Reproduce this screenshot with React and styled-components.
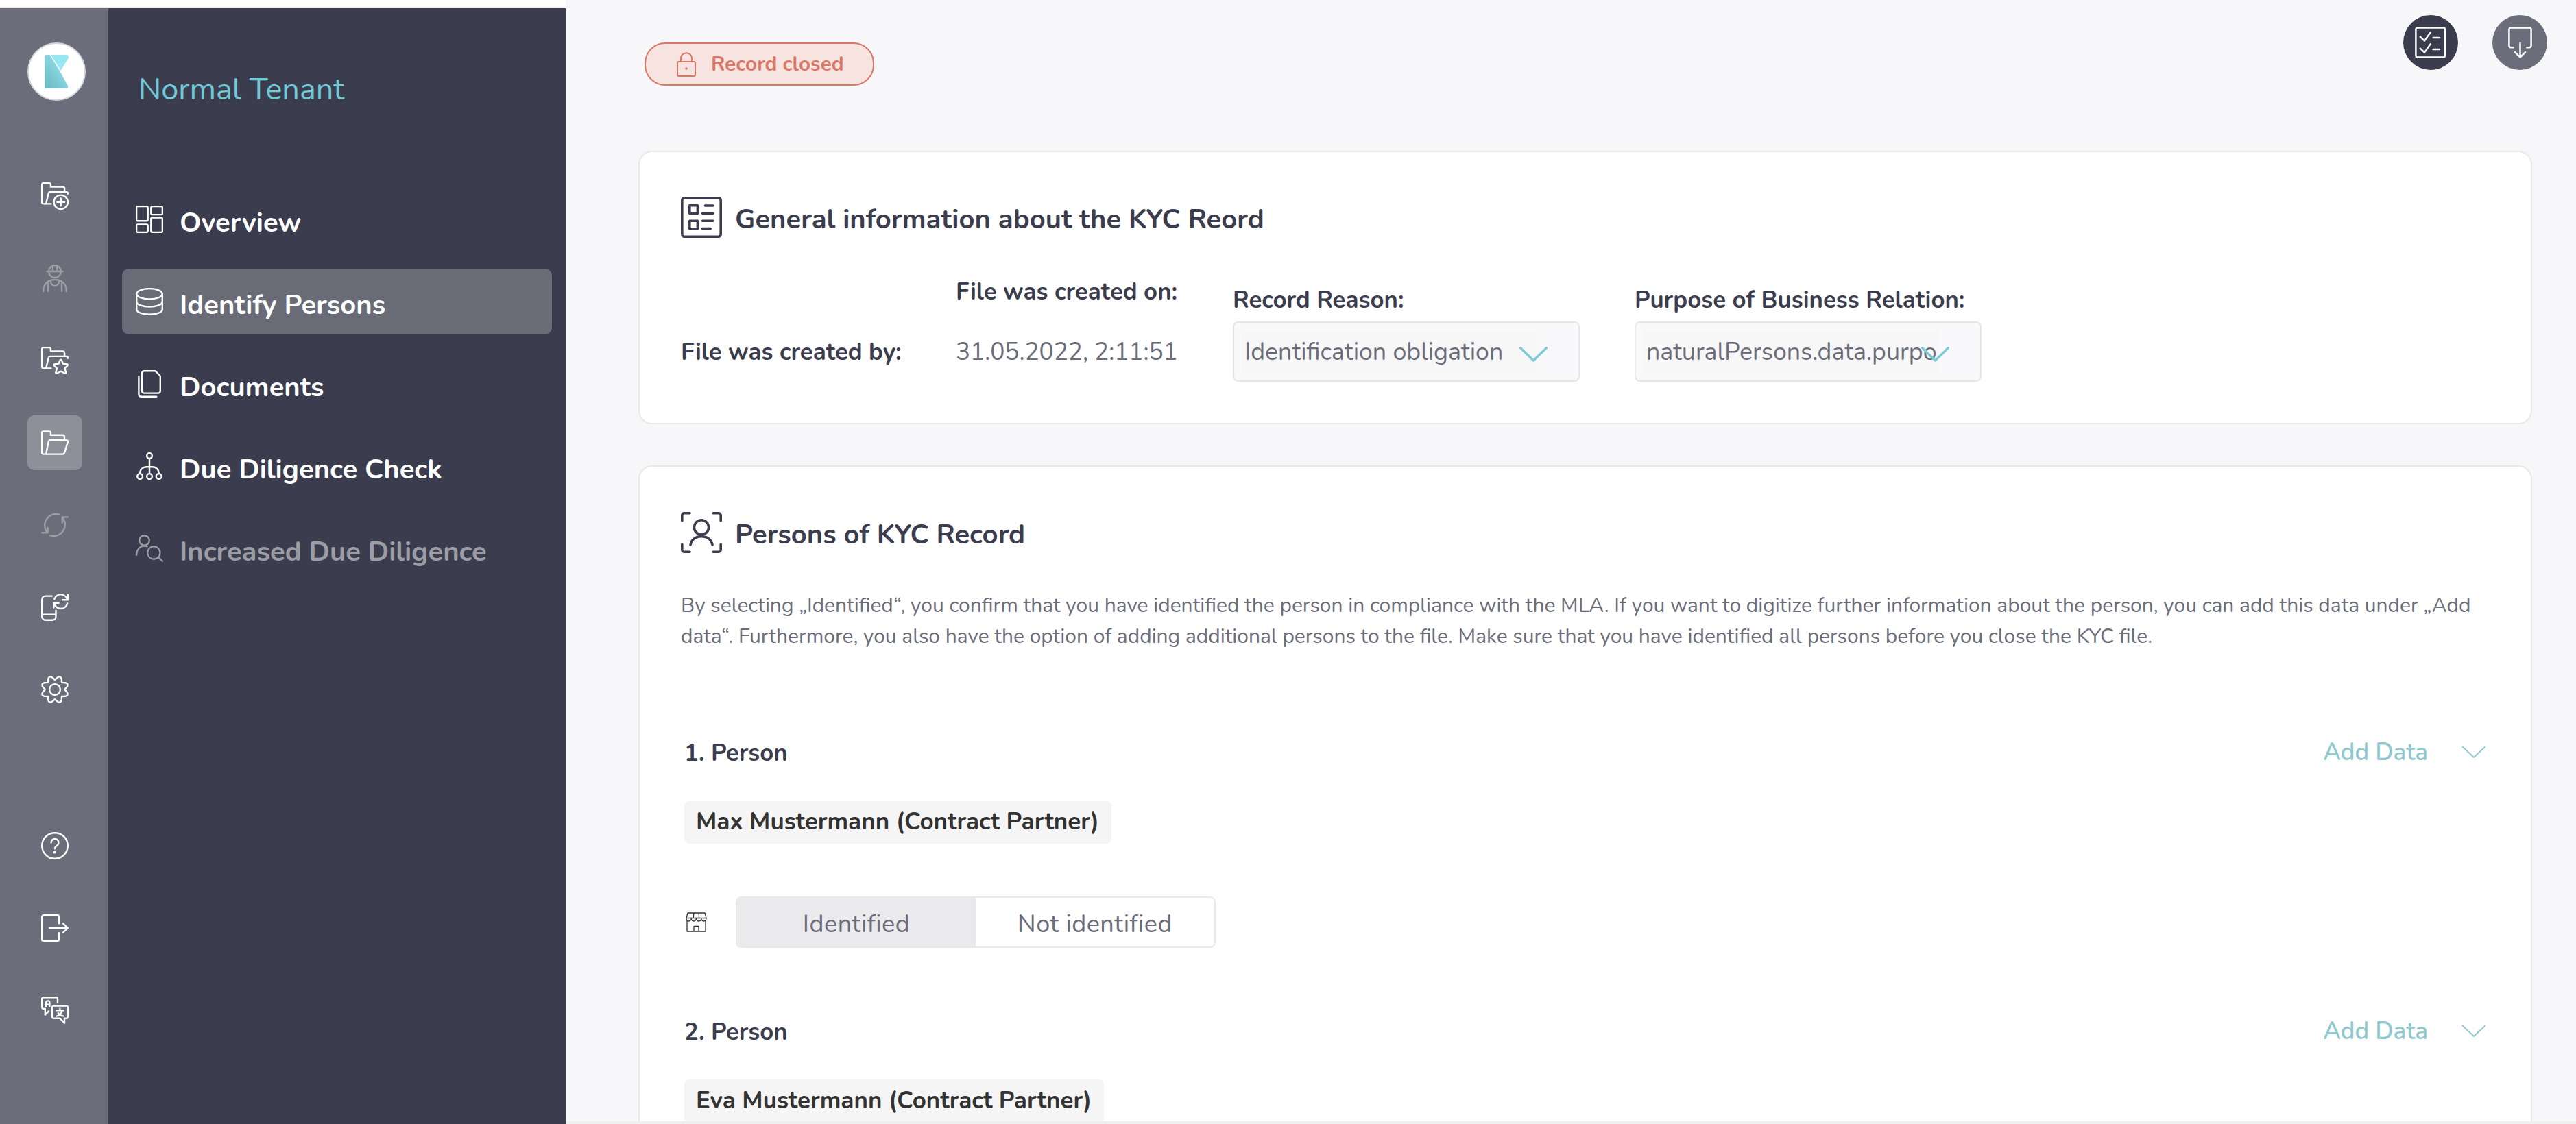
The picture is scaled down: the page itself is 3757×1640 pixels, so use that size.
import React from 'react';

import styled, { createGlobalStyle } from 'styled-components';


const GlobalStyle = createGlobalStyle`
  * {
    box-sizing: border-box;
  }
  body {
    margin: 0;
    background: #f7f7fa;
    color: #3b3d4f;
    font-family: Nunito, Lato, "Open Sans", sans-serif;
    font-size: 35.2px;
    line-height: 48px;
  }
`;

/* ---------- icons ---------- */

const Svg = styled.svg`
  display: block;
  flex: none;
  fill: none;
  stroke: currentColor;
  stroke-width: ${(p) => p.$stroke || 2.4};
  stroke-linecap: round;
  stroke-linejoin: round;
`;

const Icon = ({ w = 40, h = 40, stroke, children }) => (
  <Svg width={w} height={h} viewBox={`0 0 ${w} ${h}`} $stroke={stroke}>
    {children}
  </Svg>
);

const folderBack = 'M14.4 31.4H3.4a2.3 2.3 0 0 1-2.3-2.3V3.4A2.3 2.3 0 0 1 3.4 1.1h8.2a2.3 2.3 0 0 1 2.3 2.3v3.1h17.4a2.8 2.8 0 0 1 2.8 2.8v4.5';
const folderFlap = 'M5.6 31.4c1 0 1.5-.6 1.8-1.7l3.3-13.4a3 3 0 0 1 2.9-2.4h23c1.5 0 2.5 1.3 2.2 2.9';

const FolderAddIcon = () => (
  <Icon>
    <path d={folderBack} />
    <path d={folderFlap} />
    <circle cx="28.7" cy="28.8" r="10.2" />
    <path d="M28.7 23.4v10.8M23.3 28.8h10.8" />
  </Icon>
);

const FolderStarIcon = () => (
  <Icon>
    <path d={folderBack} />
    <path d={folderFlap} />
    <path d="M27.4 19.9q1.3-2.2 2.6 0l2.1 4.8 5.2.5q2.4.5.9 2.4l-3.9 3.7 1.7 5.7q.3 2.3-1.9 1.5l-5.4-2.7-5.4 2.7q-2.2.8-1.9-1.5l1.7-5.7-3.9-3.7q-1.5-1.9.9-2.4l5.2-.5z" />
  </Icon>
);

const FolderIcon = () => (
  <Icon>
    <path d="M34 16.2v-4.6a2.8 2.8 0 0 0-2.8-2.8H13.9V5.7a2.3 2.3 0 0 0-2.3-2.3H3.4a2.3 2.3 0 0 0-2.3 2.3v28.6a2.3 2.3 0 0 0 2.3 2.3h27.8a3 3 0 0 0 2.9-2.3l4.7-15.2a2.3 2.3 0 0 0-2.3-2.9H13.6a3 3 0 0 0-2.9 2.3L7.4 34.9c-.3 1.1-.8 1.7-1.8 1.7" />
  </Icon>
);

const WorkerIcon = () => (
  <Icon>
    <circle cx="20" cy="10" r="9" />
    <path d="M8.4 10h23.2M16.8 1.8v7.6M23.2 1.8v7.6" />
    <path d="M3.3 39v-1c0-9 6-16 16.7-16s16.7 7 16.7 16v1" />
    <path d="M13.6 23.6c0 4.4 3 7.6 6.4 7.6s6.4-3.2 6.4-7.6M10 27v12M30 27v12" />
  </Icon>
);

const SyncIcon = () => (
  <Icon>
    <path d="M26.6 4.7A16.6 16.6 0 0 0 9 31.2M1.2 31.3h8.3v-7.6" />
    <path d="M13.4 35.3A16.6 16.6 0 0 0 31 8.8M38.8 8.5h-8v8.2" />
  </Icon>
);

const PhoneSyncIcon = () => (
  <Icon>
    <path d="M15.6 3.6H6.5a5.3 5.3 0 0 0-5.3 5.3v24.6a5.3 5.3 0 0 0 5.3 5.3h9.7a5.3 5.3 0 0 0 5.3-5.3v-8.7M1.2 30.7h20.3" />
    <path d="M19.3 8a9.8 9.8 0 0 1 18.8.8M38.8 1.6v7.7h-7.4" />
    <path d="M38.2 14.3a9.8 9.8 0 0 1-19.2-.2M18.4 20.6v-6.8h7.2" />
  </Icon>
);

// eight rounded teeth, notches on the axes
const gearPath = Array.from({ length: 160 }, (_, i) => {
  const a = (i / 160) * Math.PI * 2;
  const s = (1 - Math.cos(8 * a)) / 2;
  const r = 14.3 + 5.6 * Math.pow(s, 0.75);
  return `${i ? 'L' : 'M'}${(20 + r * Math.cos(a)).toFixed(2)} ${(20 + r * Math.sin(a)).toFixed(2)}`;
}).join('') + 'Z';

const GearIcon = () => (
  <Icon>
    <path d={gearPath} />
    <circle cx="20" cy="20" r="7.9" />
  </Icon>
);

const HelpIcon = () => (
  <Icon>
    <circle cx="20" cy="20" r="18.8" />
    <path d="M14.6 15.4a5.4 5.4 0 1 1 8.4 4.4c-2 1.3-3 2.2-3 4.5" />
    <circle cx="20" cy="29.4" r="1" fill="currentColor" />
  </Icon>
);

const LogoutIcon = () => (
  <Icon>
    <path d="M26 13.2V3.6a2.3 2.3 0 0 0-2.3-2.3H3.5a2.3 2.3 0 0 0-2.3 2.3v32.8a2.3 2.3 0 0 0 2.3 2.3h20.2a2.3 2.3 0 0 0 2.3-2.3v-9.2" />
    <path d="M12.4 20h26.4M32 13.4l6.8 6.6-6.8 6.6" />
  </Icon>
);

const TranslateIcon = () => (
  <Icon>
    <path d="M24 9V3.4a2.2 2.2 0 0 0-2.2-2.2H3.4a2.2 2.2 0 0 0-2.2 2.2v12.4A2.2 2.2 0 0 0 3.4 18h2.4v8.6l5.4-5.4" />
    <path d="M7.2 14.6V9a2.6 2.6 0 0 1 5.2 0v5.6M7.2 11.6h5.2" />
    <path d="M18.2 13.6h18.4a2.2 2.2 0 0 1 2.2 2.2v13.8a2.2 2.2 0 0 1-2.2 2.2H34v7l-6.6-7h-9.2a2.2 2.2 0 0 1-2.2-2.2V15.8a2.2 2.2 0 0 1 2.2-2.2z" />
    <path d="M27.4 17.4v2.8M22.2 20.4h10.4M30.4 20.4c-.8 3.8-3.6 7-8 8.2M24.8 24c1.6 2.4 4.2 4 7.8 4.6" />
  </Icon>
);

const DashboardIcon = () => (
  <Icon>
    <rect x="1.1" y="1.1" width="16.6" height="21.2" rx="1.8" />
    <rect x="22.3" y="1.1" width="16.6" height="12" rx="1.8" />
    <rect x="1.1" y="27.4" width="16.6" height="11.5" rx="1.8" />
    <rect x="22.3" y="17.5" width="16.6" height="21.4" rx="1.8" />
  </Icon>
);

const DatabaseIcon = () => (
  <Icon>
    <ellipse cx="20" cy="8.8" rx="18.8" ry="7.7" />
    <path d="M1.2 8.8v22.6c0 4.2 8.4 7.4 18.8 7.4s18.8-3.2 18.8-7.4V8.8" />
    <path d="M1.2 20c0 4.2 8.4 7.6 18.8 7.6S38.8 24.2 38.8 20" />
  </Icon>
);

const DocumentsIcon = () => (
  <Icon>
    <path d="M12.2 1.2h15.6a2 2 0 0 1 1.4.6l6 6.2a2 2 0 0 1 .6 1.4v21a3.2 3.2 0 0 1-3.2 3.2H12.2A3.2 3.2 0 0 1 9 30.4v-26a3.2 3.2 0 0 1 3.2-3.2z" />
    <path d="M4.4 9.2v26.4a3.2 3.2 0 0 0 3.2 3.2h22.6" />
  </Icon>
);

const TreeIcon = () => (
  <Icon>
    <circle cx="20" cy="5.1" r="3.9" />
    <circle cx="6.1" cy="35" r="3.9" />
    <circle cx="20" cy="35" r="3.9" />
    <circle cx="33.7" cy="35" r="3.9" />
    <path d="M20 9v22M6.1 31c0-6 4-9.7 10-9.7h7.7c6 0 9.9 3.7 9.9 9.7" />
  </Icon>
);

const UserSearchIcon = () => (
  <Icon>
    <circle cx="12.5" cy="8.5" r="7.3" />
    <path d="M1.2 29.6c0-7.8 5-13 11-13 1.6 0 3 .2 4.3.7" />
    <circle cx="26.3" cy="26.5" r="9.2" />
    <path d="M32.9 33l6 5.6" />
  </Icon>
);

const ReportIcon = () => (
  <Icon w={60} h={60} stroke={3.6}>
    <rect x="1.8" y="1.8" width="56.4" height="56.4" rx="3.4" />
    <rect x="12.8" y="12.8" width="11.6" height="11.6" />
    <rect x="12.8" y="35.2" width="11.6" height="11.6" />
    <path d="M35.4 13h11.6M31.6 24.3h15.4M31.6 35.3h15.4M31.6 46.6h11.6" />
  </Icon>
);

const PersonScanIcon = () => (
  <Icon w={60} h={60} stroke={3.6}>
    <path d="M1.8 13V4.8a3 3 0 0 1 3-3H13M47 1.8h8.2a3 3 0 0 1 3 3V13M58.2 47v8.2a3 3 0 0 1-3 3H47M13 58.2H4.8a3 3 0 0 1-3-3V47" />
    <circle cx="30" cy="22.4" r="10.6" />
    <path d="M14 48c1.6-7.6 7.6-12.4 16-12.4S44.4 40.4 46 48" />
  </Icon>
);

const LockIcon = () => (
  <Icon w={28} h={36} stroke={2}>
    <rect x="1" y="14" width="26" height="21" rx="2" />
    <path d="M6 14V9.2a8 8 0 0 1 16 0V14" />
    <circle cx="14" cy="24" r=".8" />
  </Icon>
);

const ChecklistIcon = () => (
  <Icon w={46} h={46} stroke={2.5}>
    <rect x="1.4" y="1.4" width="42.6" height="43" rx="2.6" />
    <path d="M7.8 14.6l6.2 6 8.6-12.2M26.6 16h9.4M7.8 31.6l6.2 6 8.6-12.2M26.6 33h9.4" />
  </Icon>
);

const ExportIcon = () => (
  <Icon w={35} h={46} stroke={2.5}>
    <path d="M7.4 30.2H4.2a2.8 2.8 0 0 1-2.8-2.8V4.2a2.8 2.8 0 0 1 2.8-2.8h26.6a2.8 2.8 0 0 1 2.8 2.8v23.2a2.8 2.8 0 0 1-2.8 2.8h-3.6" />
    <path d="M17.5 23.4v21.2M10 37.2l7.5 7.4 7.5-7.4" />
  </Icon>
);

const StoreIcon = () => (
  <Icon w={31} h={29} stroke={1.3}>
    <path d="M3 1h25l2 7.5H1zM11.8 1l-.4 7.5M19.2 1l.4 7.5" />
    <path d="M1 8.5c0 6 7.2 6 7.2 0 0 6 7.3 6 7.3 0 0 6 7.3 6 7.3 0 0 6 7.2 6 7.2 0" />
    <path d="M2 12.5V28h27V12.5M12 28v-7.5h7V28" />
  </Icon>
);

const ChevronIcon = ({ w = 41, h = 22, stroke = 3.4 }) => (
  <Icon w={w} h={h} stroke={stroke}>
    <path d={`M1.7 1.7L${w / 2} ${h - 2}L${w - 1.7} 1.7`} />
  </Icon>
);

const KLogo = () => (
  <svg width="35" height="49" viewBox="0 0 35 49">
    <defs>
      <linearGradient id="kfill" x1="1" y1="0" x2="0" y2="1">
        <stop offset="0" stopColor="#9debf6" />
        <stop offset="1" stopColor="#68b7bf" />
      </linearGradient>
    </defs>
    <path d="M2 0h5.5l15.3 24.5L34 45.5q.6 3.5-2.5 3.5H2q-2 0-2-2V2q0-2 2-2z" fill="url(#kfill)" />
    <path d="M9 0H32q3 0 3 4.5L23.6 22.8z" fill="#97e7f1" />
  </svg>
);

/* ---------- layout ---------- */

const Page = styled.div`
  display: flex;
  height: 1640px;
  overflow: hidden;
`;

const Side = styled.div`
  width: 825px;
  flex: none;
  display: flex;
  flex-direction: column;
`;

const SideTop = styled.div`
  height: 12px;
  flex: none;
  background: #ffffff;
  border-bottom: 2px solid #e9ebee;
`;

const SideBody = styled.div`
  flex: 1;
  display: flex;
`;

const Rail = styled.nav`
  width: 158px;
  padding: 50px 0 0 40px;
  background: #6b6d7a;
`;

const LogoBadge = styled.div`
  width: 85px;
  height: 85px;
  border-radius: 50%;
  border: 2px solid #d3d4d8;
  background: #ffffff;
  display: flex;
  align-items: center;
  justify-content: center;
`;

const RailGroup = styled.div`
  margin-top: ${(p) => p.$top}px;
  display: flex;
  flex-direction: column;
  gap: 40px;
`;

const RailButton = styled.div`
  width: 80px;
  height: 80px;
  border-radius: 10px;
  display: flex;
  align-items: center;
  justify-content: center;
  color: ${(p) => (p.$disabled ? '#9b9da4' : '#ffffff')};
  background: ${(p) => (p.$active ? '#8d9098' : 'transparent')};
`;

const Menu = styled.nav`
  flex: 1;
  padding: 89px 20px 0;
  background: #3b3d4f;
`;

const Tenant = styled.div`
  margin-bottom: 111px;
  padding-left: 24px;
  font-size: 45px;
  line-height: 60px;
  color: #70cad8;
`;

const MenuItem = styled.div`
  height: 96px;
  margin-bottom: 24px;
  padding: 0 20px;
  border-radius: 10px;
  display: flex;
  align-items: center;
  gap: 24px;
  color: ${(p) => (p.$disabled ? '#9b9da4' : '#ffffff')};
  background: ${(p) => (p.$active ? '#696b76' : 'transparent')};
`;

const MenuLabel = styled.span`
  padding-top: 10px;
  font-size: 40px;
  font-weight: 700;
  white-space: nowrap;
`;

const Main = styled.main`
  flex: 1;
  min-width: 0;
  display: flex;
  flex-direction: column;
`;

const Content = styled.div`
  height: 1636px;
  overflow: hidden;
`;

const BottomEdge = styled.div`
  height: 4px;
  background: #f0f0f1;
`;

const Header = styled.header`
  height: 220px;
  padding: 22px 42px 0 115px;
  display: flex;
  align-items: flex-start;
  justify-content: space-between;
`;

const StatusPill = styled.div`
  margin-top: 40px;
  width: 335px;
  height: 63px;
  padding-left: 45px;
  border: 2px solid #d97866;
  border-radius: 30px;
  background: #f7e3df;
  color: #d97866;
  display: flex;
  align-items: center;
  gap: 22px;
  font-size: 29.8px;
  font-weight: 700;
  white-space: nowrap;
`;

const HeaderActions = styled.div`
  display: flex;
  gap: 50px;
`;

const RoundButton = styled.div`
  width: 80px;
  height: 80px;
  border-radius: 50%;
  display: flex;
  align-items: center;
  justify-content: center;
  color: #ffffff;
  background: ${(p) => (p.$muted ? '#6b6d7a' : '#3b3d4f')};
`;

const Card = styled.section`
  width: 2762px;
  height: ${(p) => p.$height}px;
  margin: 0 0 60px 106px;
  padding: ${(p) => p.$top}px 60px 0;
  border: 2px solid #e9e9eb;
  border-radius: 20px;
  background: #ffffff;
`;

const CardHead = styled.div`
  height: 60px;
  display: flex;
  align-items: center;
  gap: 19px;
`;

const CardTitle = styled.h2`
  margin: 0;
  padding-top: 5px;
  font-size: 40px;
  font-weight: 700;
`;

const Fields = styled.div`
  margin-top: 54px;
  display: grid;
  grid-template-columns: 401px 404px 586px 506px;
  align-items: end;
`;

const Field = styled.div`
  padding-bottom: ${(p) => (p.$plain ? 20 : 0)}px;
  display: flex;
  flex-direction: column;
  gap: ${(p) => (p.$plain ? 40 : 8)}px;
`;

const FieldLabel = styled.span`
  padding-top: 1px;
  margin-bottom: -1px;
  font-size: 34.85px;
  font-weight: 700;
  white-space: nowrap;
`;

const FieldValue = styled.span`
  color: #6b6d7a;
  white-space: nowrap;
`;

const SelectBox = styled.div`
  position: relative;
  width: 506px;
  height: 88px;
  padding: 11px 10px;
  border: 2px solid #e5e6e8;
  border-radius: 8px;
  background: #f9f9fc;
`;

const SelectValue = styled.div`
  width: 431px;
  height: 62px;
  padding-left: 5px;
  overflow: hidden;
  background: #f7f7f7;
  color: #6b6d7a;
  font-size: 35.8px;
  line-height: 63px;
  white-space: nowrap;
`;

const SelectArrow = styled.span`
  position: absolute;
  left: 416px;
  top: 35px;
  color: #7accd8;
`;

const Hint = styled.p`
  margin: 54px 0 124px;
  font-size: 29.96px;
  line-height: 45px;
  color: #6b6d7a;
  white-space: nowrap;
`;

const Person = styled.div`
  height: 407px;
  padding: 0 5px;
`;

const PersonHead = styled.div`
  height: 48px;
  display: flex;
  justify-content: space-between;
  align-items: center;
  font-size: 34.85px;
  font-weight: 700;
`;

const AddData = styled.div`
  display: flex;
  align-items: center;
  gap: 49px;
  margin-top: -3px;
  color: #8fc8cf;
  font-size: 35px;
  font-weight: 600;
`;

const PersonName = styled.div`
  width: fit-content;
  height: 63px;
  margin-top: 45px;
  padding: 0 18px 0 17px;
  border-radius: 8px;
  background: #f5f5f5;
  color: #333333;
  font-size: 34.98px;
  font-weight: 700;
  line-height: 62px;
  white-space: nowrap;
`;

const IdentRow = styled.div`
  margin: 77px 0 0 2px;
  display: flex;
  align-items: center;
  gap: 42px;
  color: #333333;
`;

const Toggle = styled.div`
  width: 700px;
  height: 75px;
  border: 2px solid #e9e9eb;
  border-radius: 8px;
  overflow: hidden;
  display: flex;
`;

const ToggleOption = styled.div`
  flex: 1;
  padding-top: 3px;
  text-align: center;
  line-height: 71px;
  font-size: 36px;
  letter-spacing: 0.5px;
  color: #6b6d7a;
  background: ${(p) => (p.$selected ? '#ebebed' : '#ffffff')};
`;

/* ---------- data ---------- */

const railTop = [
  { icon: FolderAddIcon },
  { icon: WorkerIcon, disabled: true },
  { icon: FolderStarIcon },
  { icon: FolderIcon, active: true },
  { icon: SyncIcon, disabled: true },
  { icon: PhoneSyncIcon },
  { icon: GearIcon },
];

const railBottom = [{ icon: HelpIcon }, { icon: LogoutIcon }, { icon: TranslateIcon }];

const menuItems = [
  { label: 'Overview', icon: DashboardIcon },
  { label: 'Identify Persons', icon: DatabaseIcon, active: true },
  { label: 'Documents', icon: DocumentsIcon },
  { label: 'Due Diligence Check', icon: TreeIcon },
  { label: 'Increased Due Diligence', icon: UserSearchIcon, disabled: true },
];

const persons = [
  { name: 'Max Mustermann (Contract Partner)', onSite: true },
  { name: 'Eva Mustermann (Contract Partner)', onSite: false },
];

const RailButtons = ({ items, top }) => (
  <RailGroup $top={top}>
    {items.map(({ icon: ItemIcon, active, disabled }, i) => (
      <RailButton key={i} $active={active} $disabled={disabled}>
        <ItemIcon />
      </RailButton>
    ))}
  </RailGroup>
);

const Select = ({ value }) => (
  <SelectBox>
    <SelectValue>{value}</SelectValue>
    <SelectArrow>
      <ChevronIcon />
    </SelectArrow>
  </SelectBox>
);

const App = () => {

  return (
    <>
      <GlobalStyle />
      <Page>
        <Side>
          <SideTop />
          <SideBody>
            <Rail>
              <LogoBadge>
                <KLogo />
              </LogoBadge>
              <RailButtons items={railTop} top={99} />
              <RailButtons items={railBottom} top={148} />
            </Rail>
            <Menu>
              <Tenant>Normal Tenant</Tenant>
              {menuItems.map(({ label, icon: ItemIcon, active, disabled }) => (
                <MenuItem key={label} $active={active} $disabled={disabled}>
                  <ItemIcon />
                  <MenuLabel>{label}</MenuLabel>
                </MenuItem>
              ))}
            </Menu>
          </SideBody>
        </Side>

        <Main>
          <Content>
            <Header>
              <StatusPill>
                <LockIcon />
                Record closed
              </StatusPill>
              <HeaderActions>
                <RoundButton>
                  <ChecklistIcon />
                </RoundButton>
                <RoundButton $muted>
                  <ExportIcon />
                </RoundButton>
              </HeaderActions>
            </Header>

            <Card $height={399} $top={65}>
              <CardHead>
                <ReportIcon />
                <CardTitle>General information about the KYC Reord</CardTitle>
              </CardHead>
              <Fields>
                <Field $plain>
                  <FieldLabel>File was created by:</FieldLabel>
                </Field>
                <Field $plain>
                  <FieldLabel>File was created on:</FieldLabel>
                  <FieldValue>31.05.2022, 2:11:51</FieldValue>
                </Field>
                <Field>
                  <FieldLabel>Record Reason:</FieldLabel>
                  <Select value="Identification obligation" />
                </Field>
                <Field>
                  <FieldLabel>Purpose of Business Relation:</FieldLabel>
                  <Select value="naturalPersons.data.purpo" />
                </Field>
              </Fields>
            </Card>

            <Card $height={1400} $top={66}>
              <CardHead>
                <PersonScanIcon />
                <CardTitle>Persons of KYC Record</CardTitle>
              </CardHead>
              <Hint>
                By selecting „Identified“, you confirm that you have identified the person in compliance with the MLA. If you want to digitize further information about the person, you can add this data under „Add
                <br />
                data“. Furthermore, you also have the option of adding additional persons to the file. Make sure that you have identified all persons before you close the KYC file.
              </Hint>
              {persons.map(({ name, onSite }, i) => (
                <Person key={name}>
                  <PersonHead>
                    <span>{i + 1}. Person</span>
                    <AddData>
                      Add Data
                      <ChevronIcon w={36} h={19} stroke={2} />
                    </AddData>
                  </PersonHead>
                  <PersonName>{name}</PersonName>
                  {onSite && (
                    <IdentRow>
                      <StoreIcon />
                      <Toggle>
                        <ToggleOption $selected>Identified</ToggleOption>
                        <ToggleOption>Not identified</ToggleOption>
                      </Toggle>
                    </IdentRow>
                  )}
                </Person>
              ))}
            </Card>
          </Content>
          <BottomEdge />
        </Main>
      </Page>
    </>
  );
}

export default App;
